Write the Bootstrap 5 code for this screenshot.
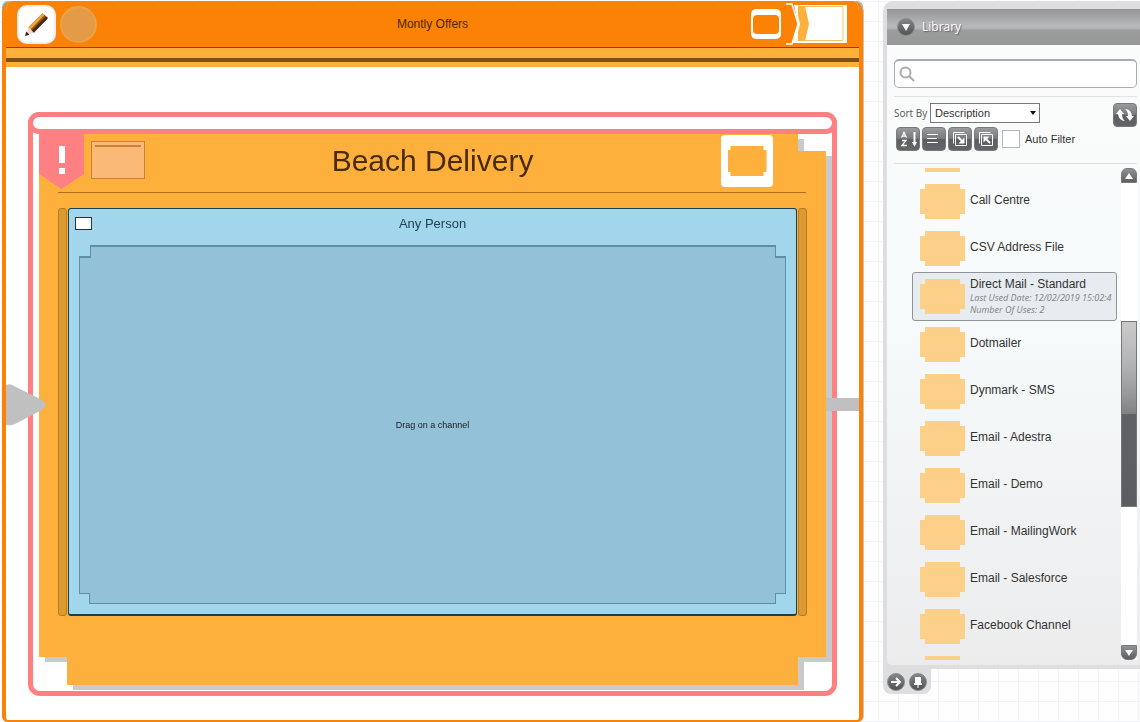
<!DOCTYPE html>
<html lang="en">
<head>
<meta charset="utf-8">
<meta name="viewport" content="width=device-width, initial-scale=1">
<title>Montly Offers</title>
<link href="https://cdn.jsdelivr.net/npm/bootstrap@5.3.0/dist/css/bootstrap.min.css" rel="stylesheet">
<style>
:root{--amber:#fdb03c;--orange:#fc8206;--pink:#fe8082;--tile:#fdd08a}
body{font:12px/16px "Liberation Sans",Arial,sans-serif;color:#333;background-color:#fefefe;
 background-image:linear-gradient(90deg,transparent 18px,#f2f2fa 18px,#f2f2fa 19px,transparent 19px),linear-gradient(transparent 1px,#f2f2fa 1px,#f2f2fa 2px,transparent 2px);background-size:20px 20px}
.desk{height:100vh;min-height:560px}
/* campaign window */
.blue-back{background:#79bde0;border-radius:6px;margin:1px 0 0 2px;min-width:0}
.stage{border:4px solid var(--orange);border-width:0 4px 2px;border-radius:10px 10px 6px 6px;background:#fff;box-shadow:1px 0 #c9c3bd;overflow:hidden}
.stage-head{background:var(--orange);height:46px;margin:0 -4px;padding:0 15px;color:#4a2500}
.stage-stripes{height:20px;border-top:1px solid #8a4505;background:linear-gradient(var(--amber) 10px,#7c4f14 10px,#7c4f14 14px,var(--amber) 14px)}
.side-slot{flex:1 1 0}
.pencil-btn{width:39px;height:39px;border:2px solid #eee;border-radius:10px;background:#fff}
.dot-btn{width:37px;height:37px;border:2px solid #eba147;border-radius:50%;background:#e39b47}
.frame-btn{width:30px;height:30px;border:0;border-radius:5px;background:#fff}
.frame-btn span{width:26px;height:19px;border-radius:4px;background:var(--orange)}
.stage-body{padding:45px 22px 24px;position:relative}
.alert-frame{border:5px solid var(--pink);border-radius:12px;background:#fff}
.alert-bar{border:5px solid var(--pink);margin:-5px -5px 0;height:22px;border-radius:12px;background:#fff}
.folder{margin:0 6px 6px;filter:drop-shadow(6px 5px 0 #cacaca)}
.folder-shape{background:var(--amber);
 clip-path:polygon(0 0,calc(100% - 28px) 0,calc(100% - 28px) 17px,100% 17px,100% calc(100% - 28px),calc(100% - 28px) calc(100% - 28px),calc(100% - 28px) 100%,28px 100%,28px calc(100% - 28px),0 calc(100% - 28px))}
.folder-head{height:58px}
.flag{width:45px;height:55px;background:var(--pink);color:#fff;clip-path:polygon(0 0,100% 0,100% 40px,50% 100%,0 40px)}
.folder-title{font-size:30px;line-height:38px;color:#4a2a08}
.ghost-btn{width:54px;height:38px;border:1px solid #c8803a;background:#fab976;margin:7px 0 0 7px}
.ghost-btn span{border-top:2px solid #c8803a;margin:3px 3px 0}
.folder-btn{width:52px;height:52px;border:0;border-radius:4px;background:#fff;margin:1px 53px 0 0}
.notch{clip-path:polygon(3px 0,calc(100% - 3px) 0,calc(100% - 3px) 4px,100% 4px,100% calc(100% - 4px),calc(100% - 3px) calc(100% - 4px),calc(100% - 3px) 100%,3px 100%,3px calc(100% - 4px),0 calc(100% - 4px),0 4px,3px 4px)}
.folder-btn span{width:39px;height:30px;background:var(--amber)}
.folder-rule{border-top:1px solid #b0711f;margin:0 20px 0 19px}
.folder-main{padding:15px 19px 69px 19px;gap:1px}
.rail{width:9px;background:#dc9a33;border:1px solid #b87a25;border-radius:3px}
.audience{border:1px solid #173f52;border-bottom-width:2px;border-radius:3px;background:#a1d6ec;color:#24424f;padding:0 10px 10px 10px}
.audience-head{height:36px;font-size:13px;padding-top:7px}
.tick{appearance:none;width:17px;height:13px;border:1px solid #234;background:#fff;margin:1px 0 0 -4px}
.cut{clip-path:polygon(11px 0,calc(100% - 10px) 0,calc(100% - 10px) 11px,100% 11px,100% calc(100% - 10px),calc(100% - 10px) calc(100% - 10px),calc(100% - 10px) 100%,10px 100%,10px calc(100% - 10px),0 calc(100% - 10px),0 11px,11px 11px)}
.drop-edge{background:#5d8fa6;padding:2px 1px 1px}
.drop-zone{background:#92c1d8;font-size:9px;color:#222}
.arrow-in{position:absolute;left:0;top:50%;margin-top:-10px}
.link-out{position:absolute;right:0;top:50%;width:33px;height:13px;margin-top:4px;background:#c0c0c0}
/* library panel */
.dock{width:257px;margin:1px 0 0 20px}
.dock-frame{background:#dedee0;border-radius:10px 0 0 0;padding:8px 0 4px 4px;height:calc(100% - 53px)}
.dock-body{background:linear-gradient(#fbfbfb,#f7fbfb 45%,#ececed);border-radius:3px 0 0 5px}
.dock-title{height:36px;background:linear-gradient(#929394,#b9babc 48%,#b1b2b4 54%,#9b9c9d 60%,#989898);color:#fff;font:12px/18px "Open Sans",sans-serif;text-shadow:1px 1px 1px #666;padding-left:10px;gap:7px}
.search-wrap{margin:14px 3px 8px 7px;height:29px;border:1px solid #aaaab2;border-top-width:2px;border-radius:5px;background:#fff;padding-left:4px}
.search-wrap input{border:0;outline:0;background:none;min-width:0}
.thin-rule{border-top:1px solid #e2e2e6;margin:0 3px 0 7px}
.tools{padding:6px 3px 0 7px;height:66px}
.sort-label{font:10px/20px "Open Sans",sans-serif;color:#555;width:36px;white-space:nowrap}
.sort-select{width:110px;height:20px;font-size:11px;border:1px solid #777;background:#fff;color:#333;appearance:none;padding:0 4px}
.sort-arrow{pointer-events:none;position:absolute;right:4px;top:8px}
.tool-row{gap:2px;padding-left:2px}
.tool-btn{width:24px;height:24px;border:1px solid #77797a;border-radius:4px;background:linear-gradient(#9a9b9d,#77787a 50%,#5d5f62 52%,#626467);padding:0}
.filter-box{appearance:none;width:18px;height:18px;border:1px solid #b5b5b8;background:#fff;margin:0 3px 0 2px}
.auto-label{font-size:11px}
.list-zone{margin:4px 3px 5px 25px;min-height:0;gap:4px}
.entries{min-width:0}
.entry{height:47px;padding:0 8px 0 8px;gap:5px;color:#333;text-decoration:none}
.entry.partial{margin-top:-37px}
.entry.chosen{height:49px;border:1px solid #8f9499;border-radius:3px;background:#e7ecf0;padding:0 4px 0 7px}
.chosen-text{padding-bottom:2px}
.entry-tile{width:45px;height:35px;background:var(--tile)}
.entry-tile.notch{clip-path:polygon(5px 0,calc(100% - 5px) 0,calc(100% - 5px) 5px,100% 5px,100% calc(100% - 5px),calc(100% - 5px) calc(100% - 5px),calc(100% - 5px) 100%,5px 100%,5px calc(100% - 5px),0 calc(100% - 5px),0 5px,5px 5px)}
.entry-name{margin-bottom:4px}
.entry-meta{font:italic 9px/12px "Open Sans",sans-serif;color:#7c8288}
.bar{width:16px;background:#fff}
.bar-btn{height:15px;border:1px solid #77797a;background:linear-gradient(#919294,#5c5e61);padding:0}
.thumb{margin-top:138px;height:40.3%;border:1px solid #777;background:linear-gradient(#cbcbcc,#b0b1b2 25%,#969798 40%,#808183 50%,#616265 50%,#5c5d60)}
.dock-tab{width:48px;height:25px;background:#dedee0;border-radius:0 0 8px 8px;padding:0 4px}
.round-btn{width:18px;height:18px;border:1px solid #87898a;border-radius:50%;background:linear-gradient(#858688,#505254);padding:0}
</style>
</head>
<body>
<div class="desk d-flex">
<main class="blue-back flex-grow-1 d-flex">
 <div class="stage flex-grow-1 d-flex flex-column">
  <header class="stage-head d-flex align-items-center flex-shrink-0">
   <div class="side-slot d-flex align-items-center gap-1">
    <button class="pencil-btn p-0 d-flex align-items-center justify-content-center" aria-label="Edit">
     <svg width="26" height="26" viewBox="0 0 24 24"><path d="M4 15 17 2l5 4L9 20z" fill="#9b5c1d"/><path d="M4 15 17 2l2 1.500L6 17z" fill="#f2a53a"/><path d="m9 20 13-13-2-2L7 18z" fill="#4c2a0c"/><path d="m4 15 5 5-7 2z" fill="#f6d4cf"/><path d="m2 19 3 3-4 1z" fill="#222"/></svg></button>
    <button class="dot-btn p-0" aria-label="Status"></button>
   </div>
   <span>Montly Offers</span>
   <div class="side-slot d-flex align-items-center justify-content-end">
    <button class="frame-btn p-0 d-flex align-items-center justify-content-center" aria-label="Window"><span></span></button>
    <button class="border-0 p-0 bg-transparent d-flex ms-1" aria-label="Next">
     <svg width="63" height="42" viewBox="0 0 63 42"><path d="M9 2h53v38H7l6-19z" fill="#fff"/><path d="M13 3h7l4 18-4 17h-7l0-9 2-8-2-8z" fill="#fdb03c"/><path d="M20 3.500h38v34H20" fill="none" stroke="#f7c46c"/><path d="M1 1h6l6 20-6 20H1" fill="none" stroke="#fff" stroke-width="1.500"/></svg></button>
   </div>
  </header>
  <div class="stage-stripes flex-shrink-0"></div>
  <section class="stage-body flex-grow-1 d-flex flex-column">
   <div class="alert-frame flex-grow-1 d-flex flex-column">
    <div class="alert-bar flex-shrink-0"></div>
    <div class="folder flex-grow-1 d-flex">
     <div class="folder-shape flex-grow-1 d-flex flex-column">
      <div class="folder-head d-flex align-items-start">
       <div class="side-slot d-flex align-items-start">
        <div class="flag d-flex justify-content-center"><svg width="8" height="42" viewBox="0 0 8 42"><path d="M1 12h6v17H1zM1 34h6v6H1z" fill="#fff"/></svg></div>
        <button class="ghost-btn p-0 d-flex align-items-start" aria-label="Details"><span class="flex-grow-1"></span></button>
       </div>
       <h1 class="folder-title fw-normal mb-0 mt-2">Beach Delivery</h1>
       <div class="side-slot d-flex justify-content-end"><button class="folder-btn p-0 d-flex align-items-center justify-content-center" aria-label="Open"><span class="notch"></span></button></div>
      </div>
      <div class="folder-rule"></div>
      <div class="folder-main flex-grow-1 d-flex">
       <div class="rail"></div>
       <div class="audience flex-grow-1 d-flex flex-column">
        <div class="audience-head d-flex align-items-start">
         <div class="side-slot d-flex"><input type="checkbox" class="tick" id="person"></div>
         <label for="person">Any Person</label>
         <div class="side-slot"></div>
        </div>
        <div class="drop-edge cut flex-grow-1 d-flex"><div class="drop-zone cut flex-grow-1 d-flex align-items-center justify-content-center">Drag on a channel</div></div>
       </div>
       <div class="rail"></div>
      </div>
     </div>
    </div>
   </div>
   <svg class="arrow-in" width="40" height="42" viewBox="0 0 40 42"><path d="M0 1q4-2 8 1l28 14q7 5 0 10L9 40q-4 2-9 1z" fill="#c0c0c0"/></svg>
   <div class="link-out"></div>
  </section>
 </div>
</main>
<aside class="dock flex-shrink-0">
 <div class="dock-frame">
  <div class="dock-body h-100 d-flex flex-column">
   <div class="dock-title d-flex align-items-center flex-shrink-0">
    <button class="round-btn d-flex align-items-center justify-content-center" aria-label="Collapse"><svg width="8" height="7"><path d="M0 0h8L4 7z" fill="#fff"/></svg></button>
    <span>Library</span>
   </div>
   <div class="search-wrap d-flex align-items-center flex-shrink-0">
    <svg width="16" height="16" viewBox="0 0 16 16" fill="none" stroke="#aaa" stroke-width="2"><circle cx="6.500" cy="6.500" r="5"/><path d="m10 10 5 5"/></svg>
    <input type="text" class="flex-grow-1" aria-label="Search library">
   </div>
   <div class="thin-rule"></div>
   <div class="tools flex-shrink-0">
    <div class="d-flex align-items-start">
     <label class="sort-label" for="sort">Sort By</label>
     <div class="position-relative"><select id="sort" class="sort-select d-block"><option>Description</option></select><svg class="sort-arrow" width="6" height="4"><path d="M0 0h6L3 4z" fill="#111"/></svg></div>
     <button class="tool-btn ms-auto" aria-label="Refresh"><svg class="d-block mx-auto" width="18" height="18" viewBox="0 0 18 18"><path d="M0 8 4 3l4 5H6q0 5 3 7-6 0-7-7z" fill="#fff"/><path d="m18 10-4 5-4-5h2q0-5-3-7 6 0 7 7z" fill="#fff"/></svg></button>
    </div>
    <div class="tool-row d-flex align-items-center">
     <button class="tool-btn" aria-label="Sort A to Z"><svg class="d-block" width="22" height="22" viewBox="0 0 22 22" fill="none" stroke="#fff" stroke-width="1.300"><path d="m4.500 9.500 2.500-5 2.500 5M5.500 8h3M5 12.500h4l-4 5h5"/><path d="M17.500 4v12" stroke-width="2"/><path d="M15 14h5l-2.500 5z" fill="#fff" stroke="none"/></svg></button>
     <button class="tool-btn" aria-label="List view"><svg class="d-block" width="22" height="22" stroke="#fff"><path d="M4 6.500h11M4 10.500h10M4 14.500h11"/></svg></button>
     <button class="tool-btn" aria-label="Expand all"><svg class="d-block" width="22" height="22" viewBox="0 0 22 22" fill="none" stroke="#fff"><path d="M6.500 6.500h11v11h-11zM4.500 15.500v-11h11"/><path d="m9 9 4 4" stroke-width="2"/><path d="M15.500 9.500v6h-6z" fill="#fff" stroke="none"/></svg></button>
     <button class="tool-btn" aria-label="Collapse all"><svg class="d-block" width="22" height="22" viewBox="0 0 22 22" fill="none" stroke="#fff"><path d="M6.500 6.500h11v11h-11zM4.500 15.500v-11h11"/><path d="m15 15-4-4" stroke-width="2"/><path d="M8.500 14.500v-6h6z" fill="#fff" stroke="none"/></svg></button>
     <input type="checkbox" class="filter-box" id="auto"><label for="auto" class="auto-label">Auto Filter</label>
    </div>
   </div>
   <div class="thin-rule"></div>
   <div class="list-zone flex-grow-1 d-flex">
    <div class="entries flex-grow-1 overflow-hidden">
     <div class="entry partial d-flex align-items-center"><span class="entry-tile notch"></span></div>
     <a href="#" class="entry d-flex align-items-center"><span class="entry-tile notch"></span><span class="entry-name">Call Centre</span></a>
     <a href="#" class="entry d-flex align-items-center"><span class="entry-tile notch"></span><span class="entry-name">CSV Address File</span></a>
     <a href="#" class="entry chosen d-flex align-items-center"><span class="entry-tile notch flex-shrink-0"></span><span class="chosen-text text-nowrap"><span class="d-block">Direct Mail - Standard</span><span class="entry-meta d-block">Last Used Date: 12/02/2019 15:02:4</span><span class="entry-meta d-block">Number Of Uses: 2</span></span></a>
     <a href="#" class="entry d-flex align-items-center"><span class="entry-tile notch"></span><span class="entry-name">Dotmailer</span></a>
     <a href="#" class="entry d-flex align-items-center"><span class="entry-tile notch"></span><span class="entry-name">Dynmark - SMS</span></a>
     <a href="#" class="entry d-flex align-items-center"><span class="entry-tile notch"></span><span class="entry-name">Email - Adestra</span></a>
     <a href="#" class="entry d-flex align-items-center"><span class="entry-tile notch"></span><span class="entry-name">Email - Demo</span></a>
     <a href="#" class="entry d-flex align-items-center"><span class="entry-tile notch"></span><span class="entry-name">Email - MailingWork</span></a>
     <a href="#" class="entry d-flex align-items-center"><span class="entry-tile notch"></span><span class="entry-name">Email - Salesforce</span></a>
     <a href="#" class="entry d-flex align-items-center"><span class="entry-tile notch"></span><span class="entry-name">Facebook Channel</span></a>
     <div class="entry d-flex align-items-center"><span class="entry-tile notch"></span></div>
    </div>
    <div class="bar d-flex flex-column flex-shrink-0">
     <button class="bar-btn rounded-top-2 d-flex align-items-center justify-content-center" aria-label="Scroll up"><svg width="8" height="6"><path d="M0 6h8L4 0z" fill="#fff"/></svg></button>
     <div class="flex-grow-1 overflow-hidden"><div class="thumb"></div></div>
     <button class="bar-btn rounded-bottom-2 d-flex align-items-center justify-content-center" aria-label="Scroll down"><svg width="8" height="6"><path d="M0 0h8L4 6z" fill="#fff"/></svg></button>
    </div>
   </div>
  </div>
 </div>
 <div class="dock-tab d-flex align-items-center gap-1">
  <button class="round-btn d-flex align-items-center justify-content-center" aria-label="Move right"><svg width="12" height="12" fill="none" stroke="#fff" stroke-width="2"><path d="M1 6h9M6 2l4 4-4 4"/></svg></button>
  <button class="round-btn d-flex align-items-center justify-content-center" aria-label="Pin"><svg width="10" height="12"><path d="M2 1h6v6h1v2H1V7h1zM4.500 9h1v3h-1z" fill="#fff"/></svg></button>
 </div>
</aside>
</div>
<script src="https://cdn.jsdelivr.net/npm/bootstrap@5.3.0/dist/js/bootstrap.bundle.min.js"></script>
</body>
</html>
